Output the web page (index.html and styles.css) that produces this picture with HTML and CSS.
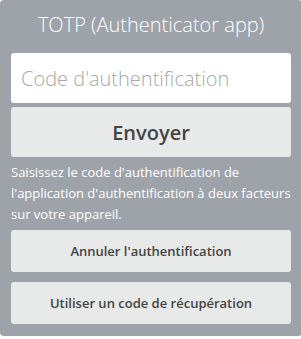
FILE: index.html
```html
<!DOCTYPE HTML>
<html>
<head>
<link rel="stylesheet" href="styles.css">
</head>
<body>
<section class="panel">
    <h2 class="title">TOTP (Authenticator app)</h2>
    <form class="totp-form">
        <input type="text" class="code-input" placeholder="Code d'authentification" autofocus>
        <button type="submit" class="btn btn-big">Envoyer</button>
    </form>
    <p class="help">Saisissez le code d'authentification de l'application d'authentification à deux facteurs sur votre appareil.</p>
    <div class="actions">
        <button type="button" class="btn">Annuler l'authentification</button>
        <button type="button" class="btn">Utiliser un code de récupération</button>
    </div>
</section>
</body>
</html>
```

FILE: styles.css
```css
body {
    margin: 0;
    padding: 0;
    font-family: "Open Sans", Arial, sans-serif;
    background: #ffffff;
}

.panel {
    width: 302px;
    box-sizing: border-box;
    padding: 10px 11px 12px;
    background-color: #9ea3aa;
    border-radius: 4px;
    color: #ffffff;
}

.title {
    margin: 0 0 13px;
    font-size: 20px;
    font-weight: 300;
    line-height: 30px;
    text-align: center;
}

.totp-form {
    display: flex;
    flex-direction: column;
    gap: 4px;
}

.code-input {
    height: 50px;
    box-sizing: border-box;
    padding: 0 10px;
    border: none;
    border-radius: 3px;
    background: #ffffff;
    font-family: inherit;
    font-size: 20px;
    font-weight: 300;
    color: #333;
    outline: none;
}

.code-input::placeholder {
    color: #a8a8a8;
}

.btn {
    height: 42px;
    border: none;
    border-radius: 3px;
    background-color: #e8e9e9;
    color: #444;
    font-family: inherit;
    font-size: 13px;
    font-weight: 600;
    cursor: pointer;
}

.btn-big {
    height: 50px;
    font-size: 20px;
}

.help {
    margin: 5px 0;
    font-size: 13px;
    line-height: 21px;
}

.actions {
    display: flex;
    flex-direction: column;
    gap: 10px;
}
```
